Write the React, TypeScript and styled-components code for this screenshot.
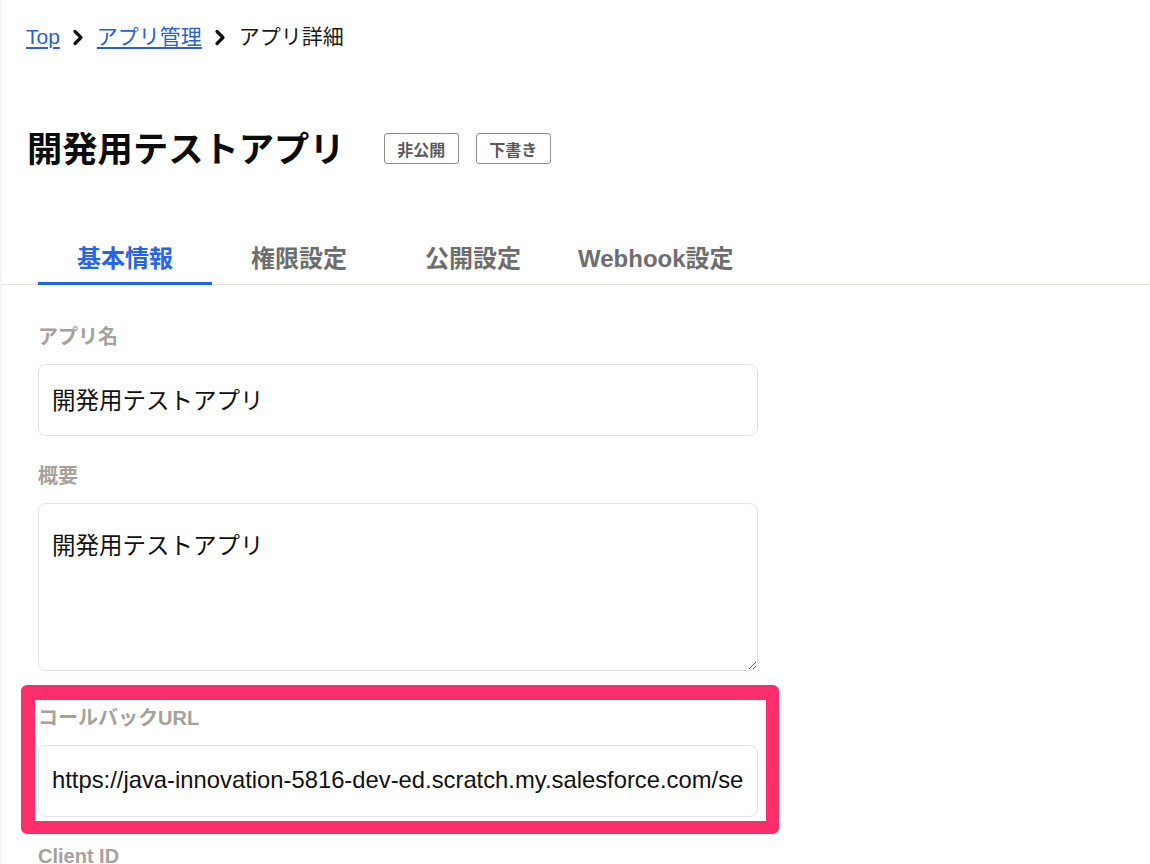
import React from "react";
import styled, { createGlobalStyle } from "styled-components";

const GlobalStyle = createGlobalStyle`
  html, body {
    margin: 0;
    padding: 0;
    background: #ffffff;
  }
  body {
    font-family: "Liberation Sans", "Noto Sans CJK JP", sans-serif;
    color: #111111;
  }
  * { box-sizing: border-box; }
`;

const Page = styled.div`
  min-height: 100vh;
  border-left: 2px solid #f2f2f8;
  overflow: hidden;
`;

const Header = styled.header`
  padding-left: 24px;
`;

const Breadcrumb = styled.nav`
  display: flex;
  align-items: center;
  padding-top: 23px;
  height: 51px;
  font-size: 21px;
  line-height: 28px;
`;

const Crumb = styled.a`
  color: #2c5fcf;
  text-decoration: underline;
  text-underline-offset: 3px;
  text-decoration-thickness: 1.5px;
`;

const CurrentCrumb = styled.span`
  color: #1a1a1a;
`;

const Sep = styled.span`
  display: inline-flex;
  align-items: center;
  justify-content: center;
  width: 37px;
  height: 28px;
`;

const Chevron = () => (
  <svg width="12" height="17" viewBox="0 0 12 17" fill="none">
    <polyline
      points="3,2.5 9,8.5 3,14.5"
      stroke="#111"
      strokeWidth="3.2"
      strokeLinecap="round"
      strokeLinejoin="round"
    />
  </svg>
);

const TitleRow = styled.div`
  display: flex;
  align-items: center;
  gap: 39px;
  margin-top: 77px;
  padding-left: 1px;
`;

const Title = styled.h1`
  margin: 0;
  font-size: 35.3px;
  line-height: 44px;
  font-weight: 700;
  color: #0c0c0c;
`;

const Badges = styled.div`
  display: flex;
  gap: 17px;
  margin-top: -3px;
`;

const Badge = styled.span`
  display: inline-flex;
  align-items: center;
  justify-content: center;
  height: 31px;
  padding: 0 12.5px;
  border: 1px solid #8c8c8c;
  border-radius: 3px;
  font-size: 16px;
  font-weight: 700;
  color: #5a5a5a;
`;

const TabList = styled.div`
  display: flex;
  margin-top: 60px;
  padding-left: 36px;
  border-bottom: 1px solid #e7e4de;
`;

const Tab = styled.div<{ $active?: boolean }>`
  min-width: 174px;
  padding: 12px 18px 8px;
  margin-bottom: -1px;
  text-align: center;
  font-size: 24px;
  line-height: 30px;
  font-weight: 700;
  color: ${(p) => (p.$active ? "#2764ea" : "#6e6e6e")};
  border-bottom: 3px solid ${(p) => (p.$active ? "#2764ea" : "transparent")};
`;

const Form = styled.form`
  width: 756px;
  padding: 38px 0 0 36px;
`;

const Field = styled.div<{ $gap?: number }>`
  position: relative;
  margin-bottom: ${(p) => p.$gap ?? 26}px;
`;

const Label = styled.label`
  display: block;
  font-size: 20px;
  line-height: 28px;
  font-weight: 700;
  color: #a6a29b;
  margin-bottom: 13px;
`;

const TextInput = styled.input`
  display: block;
  width: 720px;
  height: 72px;
  padding: 0 13px 2px;
  border: 1px solid #e4e4e4;
  border-radius: 8px;
  background: #fff;
  font-family: "Liberation Sans", "Noto Sans CJK JP", sans-serif;
  font-size: 23.5px;
  color: #111;
  outline: none;
`;

const UrlInput = styled(TextInput)`
  font-size: 23.8px;
  letter-spacing: 0;
`;

const TextArea = styled.textarea`
  display: block;
  width: 720px;
  height: 168px;
  margin-top: 1px;
  padding: 26px 13px 0;
  border: 1px solid #e4e4e4;
  border-radius: 8px;
  background: #fff;
  font-family: "Liberation Sans", "Noto Sans CJK JP", sans-serif;
  font-size: 23.5px;
  line-height: 32px;
  color: #111;
  outline: none;
  resize: vertical;
`;

const Highlight = styled.div`
  position: absolute;
  left: -17px;
  top: -19px;
  right: -21px;
  bottom: -17px;
  border: 14px solid #fe2e6c;
  border-top-width: 15px;
  border-right-width: 13px;
  border-bottom-width: 13px;
  border-radius: 6px;
  pointer-events: none;
`;

export default function App() {
  return (
    <>
      <GlobalStyle />
      <Page>
        <Header>
          <Breadcrumb>
            <Crumb href="#">Top</Crumb>
            <Sep>
              <Chevron />
            </Sep>
            <Crumb href="#">アプリ管理</Crumb>
            <Sep>
              <Chevron />
            </Sep>
            <CurrentCrumb>アプリ詳細</CurrentCrumb>
          </Breadcrumb>
          <TitleRow>
            <Title>開発用テストアプリ</Title>
            <Badges>
              <Badge>非公開</Badge>
              <Badge>下書き</Badge>
            </Badges>
          </TitleRow>
        </Header>
        <TabList>
          <Tab $active>基本情報</Tab>
          <Tab>権限設定</Tab>
          <Tab>公開設定</Tab>
          <Tab>Webhook設定</Tab>
        </TabList>
        <Form onSubmit={(e) => e.preventDefault()}>
          <Field>
            <Label>アプリ名</Label>
            <TextInput readOnly defaultValue="開発用テストアプリ" />
          </Field>
          <Field $gap={33}>
            <Label>概要</Label>
            <TextArea readOnly defaultValue="開発用テストアプリ" />
          </Field>
          <Field $gap={25}>
            <Label>コールバックURL</Label>
            <UrlInput
              readOnly
              defaultValue="https://java-innovation-5816-dev-ed.scratch.my.salesforce.com/services/authcallback/app"
            />
            <Highlight />
          </Field>
          <Field>
            <Label>Client ID</Label>
            <TextInput readOnly defaultValue="" />
          </Field>
        </Form>
      </Page>
    </>
  );
}
